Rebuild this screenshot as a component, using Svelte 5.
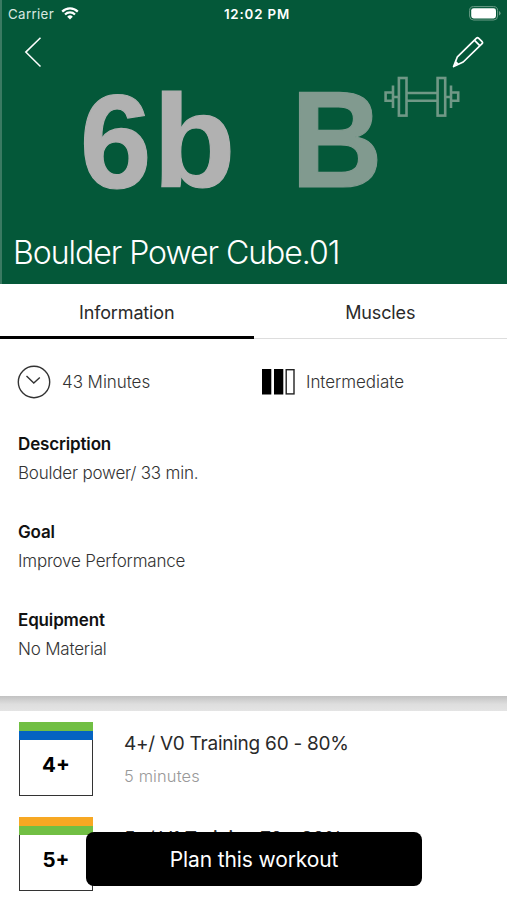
<script>
  const details = [
    { title: "Description", text: "Boulder power/ 33 min." },
    { title: "Goal", text: "Improve Performance" },
    { title: "Equipment", text: "No Material" },
  ];

  const exercises = [
    { grade: "4+", name: "4+/ V0 Training 60 - 80%", time: "5 minutes", colors: ["#71bf44", "#0563c1"] },
    { grade: "5+", name: "5+/ V1 Training 70 - 80%", time: "5 minutes", colors: ["#f7a823", "#71bf44"] },
  ];

  let tab = $state("Information");
</script>

<div class="screen">
  <header class="hero">
    <svg class="artwork" viewBox="0 0 507 284" aria-hidden="true">
      <rect width="2" height="284" fill="#3b7a62" />
      <g font-family="Liberation Sans" font-weight="700" stroke-width="1.2">
        <text transform="translate(79.8 187.5) scale(.97 1)" font-size="133" fill="#b1b1b1" stroke="#b1b1b1">6</text>
        <text transform="translate(152.9 186.6) scale(1.03 1)" font-size="131" fill="#b1b1b1" stroke="#b1b1b1">b</text>
        <text transform="translate(291 186.6) scale(.92 1)" font-size="138" fill="#819a8f" stroke="#819a8f">B</text>
      </g>
      <g fill="none" stroke="#709886" stroke-width="2.6">
        <rect x="398.9" y="78" width="7.6" height="37.6" />
        <rect x="437.6" y="78" width="7.6" height="37.6" />
        <path d="M407 93h30M407 100.8h30M393 85.5v22.5M451 85.5v22.5M392 92.5h-6.4v8.2h6.4M452 92.5h6.2v8.2h-6.2M394 97h4M446 97h4" />
      </g>
    </svg>

    <div class="status">
      <div class="carrier">
        <span>Carrier</span>
        <svg width="18" height="13" viewBox="0 0 18 13" fill="none" stroke="#fff">
          <path d="M1.2 4.6a11 11 0 0 1 15.6 0" stroke-width="2.2" />
          <path d="M4 7.5a7.1 7.1 0 0 1 10 0" stroke-width="2.2" />
          <path d="M6.2 9.7a4 4 0 0 1 5.6 0L9 12.5z" fill="#fff" stroke="none" />
        </svg>
      </div>
      <span class="clock">12:02 PM</span>
      <svg class="battery" width="32" height="15" viewBox="0 0 32 15">
        <rect x=".6" y=".6" width="28" height="13.4" rx="4" fill="none" stroke="#6b9c87" stroke-width="1" />
        <rect x="2.2" y="2.2" width="24.8" height="10.2" rx="2.4" fill="#fff" />
        <path d="M30 5v4.6q1.6-.8 1.6-2.3T30 5z" fill="#6b9c87" />
      </svg>
    </div>

    <nav class="actions">
      <button aria-label="Back">
        <svg width="20" height="32" viewBox="0 0 20 32" fill="none" stroke="#fff" stroke-width="1.5">
          <path d="M17.5 1.8 2.8 16.1l14.7 14.4" />
        </svg>
      </button>
      <button aria-label="Edit">
        <svg width="32" height="32" viewBox="0 0 32 32" fill="none" stroke="#fff" stroke-width="1.7" stroke-linejoin="round">
          <path d="M1.6 30.6 5.4 20.8 24.5 2.2q1-.9 2 0l3.6 3.5q.9 1 0 2L11.2 26z" />
          <path d="m22.6 4.3 5.2 5.4" />
          <path d="m2 30 2.3-4.8 2.4 2.4z" fill="#fff" stroke="none" />
        </svg>
      </button>
    </nav>

    <h1>Boulder Power Cube.01</h1>
  </header>

  <div class="tabs">
    {#each ["Information", "Muscles"] as name}
      <button class:active={tab === name} onclick={() => (tab = name)}>{name}</button>
    {/each}
  </div>

  <section class="info">
    <div class="facts">
      <div class="fact">
        <svg width="34" height="34" viewBox="0 0 34 34" fill="none" stroke="#333" stroke-width="1.4">
          <circle cx="17" cy="17" r="15.7" />
          <path d="m9.5 11 7.3 7 6-5.4" />
        </svg>
        <span>43 Minutes</span>
      </div>
      <div class="fact level">
        <svg width="33" height="26" viewBox="0 0 33 26">
          <rect width="9.3" height="25.5" />
          <rect x="12" width="9.3" height="25.5" />
          <rect x="24.2" y=".7" width="7.8" height="24.2" fill="none" stroke="#222" stroke-width="1.4" />
        </svg>
        <span>Intermediate</span>
      </div>
    </div>

    {#each details as item}
      <div class="detail">
        <h2>{item.title}</h2>
        <p>{item.text}</p>
      </div>
    {/each}
  </section>

  <div class="divider"></div>

  <ul class="exercises">
    {#each exercises as item}
      <li>
        <div class="badge">
          <i style="background: {item.colors[0]}"></i>
          <i style="background: {item.colors[1]}"></i>
          <b>{item.grade}</b>
        </div>
        <div class="label">
          <h3>{item.name}</h3>
          <p>{item.time}</p>
        </div>
      </li>
    {/each}
  </ul>

  <button class="plan">Plan this workout</button>
</div>

<style>
  :global(body) {
    margin: 0;
  }

  .screen {
    position: relative;
    width: 507px;
    height: 900px;
    overflow: hidden;
    background: #fff;
    color: #2a2a2a;
    font-family: Inter, "Liberation Sans", sans-serif;
  }

  button {
    padding: 0;
    border: 0;
    background: none;
    font: inherit;
    color: inherit;
  }

  svg {
    display: block;
    flex: none;
  }

  h1, h2, h3, p, ul {
    margin: 0;
    padding: 0;
  }

  .hero {
    position: relative;
    display: flex;
    flex-direction: column;
    height: 284px;
    background: #045839;
    color: #fff;
  }

  .artwork {
    position: absolute;
    inset: 0;
    width: 507px;
    height: 284px;
  }

  .status {
    position: relative;
    display: grid;
    grid-template-columns: 1fr auto 1fr;
    align-items: center;
    height: 27px;
    padding: 0 6px 0 8px;
    font-size: 13.3px;
  }

  .carrier {
    display: flex;
    align-items: center;
    gap: 7px;
    color: #d8e8e0;
    letter-spacing: 0.35px;
  }

  .clock {
    padding-left: 5px;
    font-weight: 600;
    letter-spacing: 0.85px;
  }

  .battery {
    justify-self: end;
  }

  .actions {
    position: relative;
    display: flex;
    justify-content: space-between;
    padding: 9px 23px 0;
  }

  h1 {
    position: relative;
    margin-top: auto;
    padding: 0 0 11px 13px;
    font-size: 32px;
    font-weight: 300;
    line-height: 40px;
    letter-spacing: -1.02px;
  }

  .tabs {
    display: grid;
    grid-template-columns: 1fr 1fr;
    height: 55px;
    box-sizing: border-box;
    box-shadow: inset 0 -1px #ddd;
  }

  .tabs button {
    padding-top: 4px;
    border-bottom: 3px solid transparent;
    font-size: 18px;
    letter-spacing: -0.15px;
  }

  .tabs .active {
    border-color: #000;
  }

  .info {
    height: 357px;
    box-sizing: border-box;
    padding: 26px 18px 0;
    font-size: 17px;
    font-weight: 300;
    letter-spacing: -0.05px;
    color: #333;
  }

  .facts {
    display: grid;
    grid-template-columns: 244px 1fr;
    margin-bottom: 32px;
  }

  .fact {
    display: flex;
    align-items: center;
    gap: 11px;
    height: 34px;
    margin-left: -1px;
  }

  .level {
    margin-left: 0;
  }

  .detail {
    height: 88px;
    line-height: 26px;
  }

  h2 {
    font-size: 17px;
    font-weight: 600;
    line-height: 26px;
    letter-spacing: -0.15px;
    color: #111;
  }

  .detail p {
    margin-top: 3px;
    letter-spacing: -0.2px;
  }

  .divider {
    height: 15px;
    background: linear-gradient(#c2c2c2, #dedede 55%, #e4e4e4);
  }

  .exercises {
    padding: 11px 19px 0;
    list-style: none;
  }

  .exercises li {
    display: flex;
    gap: 31px;
    height: 95px;
  }

  .badge {
    display: flex;
    flex-direction: column;
    width: 74px;
    height: 74px;
    box-sizing: border-box;
    box-shadow: inset 0 0 0 1px #333;
  }

  .badge i {
    height: 9px;
  }

  .badge b {
    margin: 13px auto 0;
    font-size: 20.5px;
    line-height: 24px;
    color: #000;
  }

  h3 {
    padding-top: 8px;
    font-size: 19px;
    font-weight: 400;
    line-height: 28px;
    letter-spacing: -0.24px;
  }

  .label p {
    margin-top: 7px;
    font-size: 16.4px;
    font-weight: 300;
    line-height: 22px;
    letter-spacing: 0.15px;
    color: #999;
  }

  .plan {
    position: absolute;
    left: 86px;
    top: 832px;
    width: 336px;
    height: 54px;
    border-radius: 8px;
    background: #000;
    color: #fff;
    font-size: 21px;
    letter-spacing: -0.12px;
  }
</style>
